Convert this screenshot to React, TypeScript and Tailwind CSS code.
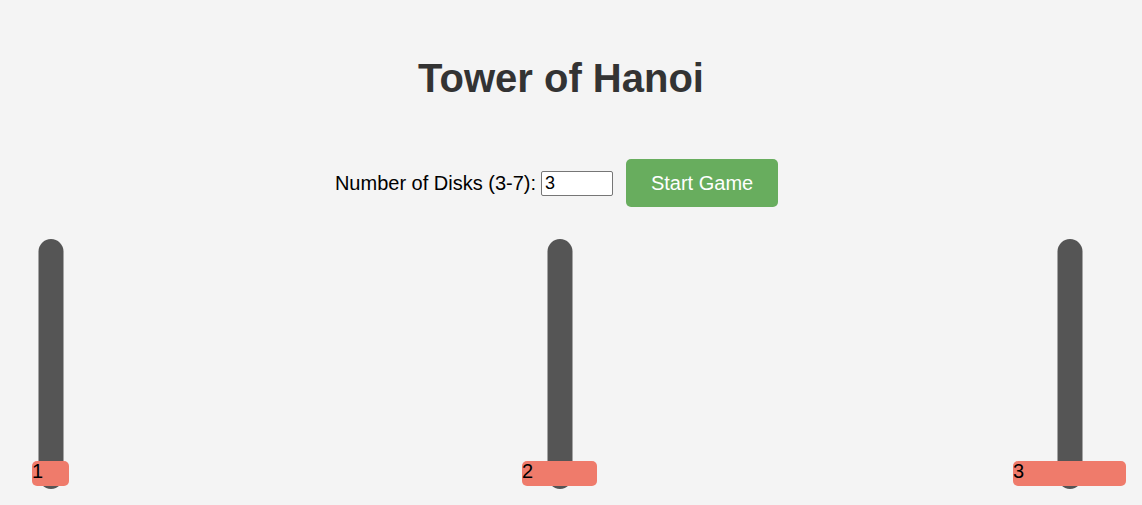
import { useState } from 'react';

const towers = [
  { id: 1, width: 'w-[37px]', offset: 'ml-[32px]' },
  { id: 2, width: 'w-[75px]', offset: 'ml-[453px]' },
  { id: 3, width: 'w-[113px]', offset: 'ml-[416px]' },
];

export default function App() {
  const [disks, setDisks] = useState('3');

  return (
    <div className="min-h-screen bg-[#f4f4f4] font-['Liberation_Sans',Arial,sans-serif] text-black">
      {/* Title */}
      <h1 className="pt-[55px] pr-[20px] text-center text-[40px] font-bold leading-[46px] text-[#333]">
        Tower of Hanoi
      </h1>

      {/* Controls */}
      <div className="mt-[58px] flex items-center justify-center pr-[29px]">
        <label className="text-[20px] leading-[23px]">Number of Disks (3-7):</label>
        <input
          type="number"
          min={3}
          max={7}
          value={disks}
          onChange={(e) => setDisks(e.target.value)}
          className="ml-[5px] h-[25px] w-[72px] rounded-[2px] border border-[#767676] bg-white pl-[3px] text-[18px] leading-[23px] outline-none [appearance:textfield]"
        />
        <button className="ml-[13px] h-[48px] w-[152px] rounded-[5px] bg-[#68ad5e] text-[20px] text-white">
          Start Game
        </button>
      </div>

      {/* Towers */}
      <div className="mt-[32px] flex h-[250px]">
        {towers.map((t) => (
          <div key={t.id} className={`relative flex flex-col justify-end ${t.width} ${t.offset}`}>
            <div className="absolute left-1/2 top-0 h-[250px] w-[25px] -translate-x-1/2 rounded-full bg-[#555]" />
            <div className="relative mb-[3px] h-[25px] rounded-[5px] bg-[#ef7b6b] text-[20px] leading-[21px]">
              {t.id}
            </div>
          </div>
        ))}
      </div>
    </div>
  );
}
